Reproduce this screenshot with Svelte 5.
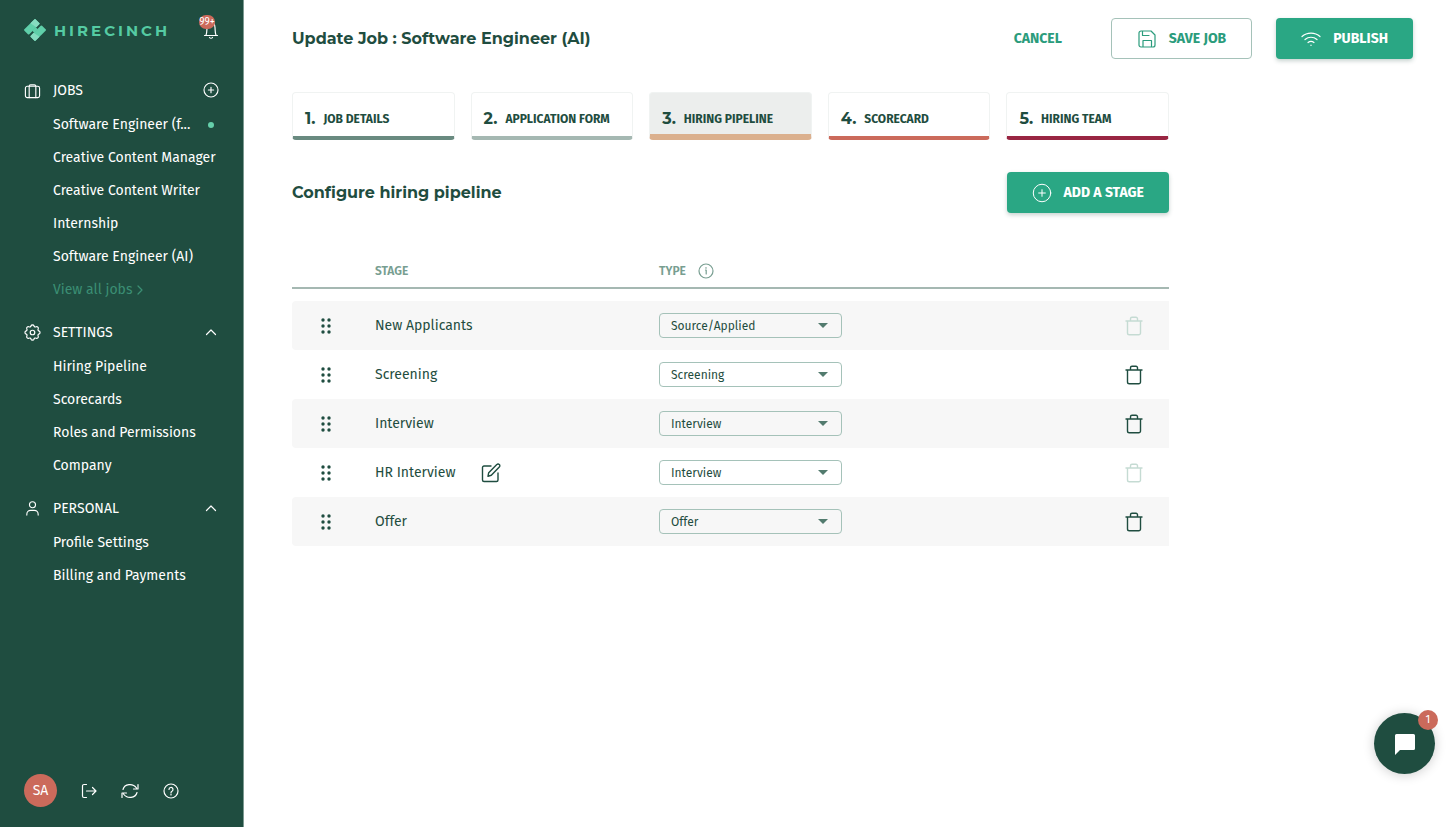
<script lang="ts">
	type Stage = { id: number; name: string; type: string; locked: boolean; editable?: boolean };

	const jobs = [
		{ title: 'Software Engineer (f...', active: true },
		{ title: 'Creative Content Manager' },
		{ title: 'Creative Content Writer' },
		{ title: 'Internship' },
		{ title: 'Software Engineer (AI)' }
	];

	const settings = ['Hiring Pipeline', 'Scorecards', 'Roles and Permissions', 'Company'];
	const personal = ['Profile Settings', 'Billing and Payments'];

	const steps = [
		{ label: 'Job details', tone: 'pine' },
		{ label: 'Application form', tone: 'sage' },
		{ label: 'Hiring pipeline', tone: 'sand' },
		{ label: 'Scorecard', tone: 'coral' },
		{ label: 'Hiring team', tone: 'wine' }
	];

	const types = ['Source/Applied', 'Screening', 'Interview', 'Offer'];

	let currentStep = $state(2);
	let settingsOpen = $state(true);
	let personalOpen = $state(true);

	let stages: Stage[] = $state([
		{ id: 1, name: 'New Applicants', type: 'Source/Applied', locked: true },
		{ id: 2, name: 'Screening', type: 'Screening', locked: false },
		{ id: 3, name: 'Interview', type: 'Interview', locked: false },
		{ id: 4, name: 'HR Interview', type: 'Interview', locked: true, editable: true },
		{ id: 5, name: 'Offer', type: 'Offer', locked: false }
	]);

	function addStage() {
		const id = Math.max(0, ...stages.map((s) => s.id)) + 1;
		stages.push({ id, name: 'New Stage', type: 'Interview', locked: false, editable: true });
	}

	function removeStage(id: number) {
		stages = stages.filter((s) => s.id !== id);
	}
</script>

{#snippet plusCircle()}
	<svg class="icon" viewBox="0 0 24 24" aria-hidden="true">
		<circle cx="12" cy="12" r="10.5" />
		<path d="M12 8v8M8 12h8" />
	</svg>
{/snippet}

{#snippet chevron(open: boolean)}
	<svg class="icon chevron" class:closed={!open} viewBox="0 0 12 8" aria-hidden="true">
		<path d="M1.500 6.500 6 2l4.500 4.500" />
	</svg>
{/snippet}

<div class="app">
	<aside class="sidebar">
		<div class="brand">
			<a class="logo" href="#home">
				<svg viewBox="0 0 22 22" aria-hidden="true">
					<g transform="rotate(45 11 11)">
						<rect x="3" y="3" width="7" height="16" rx="1" fill="#5fcfa9" />
						<rect x="12" y="3" width="7" height="16" rx="1" fill="#5fcfa9" />
						<path d="M9.500 8.500h3v5h-3z" fill="#5fcfa9" />
						<path d="M3 4a1 1 0 0 1 1-1h5a1 1 0 0 1 1 1v4L3 9.500ZM19 18a1 1 0 0 1-1 1h-5a1 1 0 0 1-1-1v-4l7-1.500Z" fill="#86dcc0" />
					</g>
				</svg>
				<span>HIRECINCH</span>
			</a>
			<button type="button" class="bell" aria-label="Notifications">
				<svg class="icon" viewBox="0 0 16 20" aria-hidden="true">
					<path d="M1.500 15.500h13M3 15.200c1-2.600.8-4.800 1-7.700C4.200 4 5.800 2 8 2s3.800 2 4 5.500c.2 2.900 0 5.100 1 7.700M6.500 17.500c.8 1 2.200 1 3 0" />
				</svg>
				<span class="count">99+</span>
			</button>
		</div>

		<nav>
			<section>
				<div class="nav-head">
					<svg class="icon" viewBox="0 0 18 18" aria-hidden="true">
						<rect x="1.500" y="4.500" width="15" height="12" rx="2" />
						<path d="M5.500 16.500v-12A1.500 1.500 0 0 1 7 3h4a1.500 1.500 0 0 1 1.500 1.500v12" />
					</svg>
					<span>JOBS</span>
					<button type="button" class="add-job" aria-label="Add job">{@render plusCircle()}</button>
				</div>
				{#each jobs as job}
					<a href="#job">{job.title}{#if job.active}<i class="dot"></i>{/if}</a>
				{/each}
				<a class="view-all" href="#jobs">
					View all jobs
					<svg class="icon" viewBox="0 0 6 10" aria-hidden="true"><path d="m1 1 4 4-4 4" /></svg>
				</a>
			</section>

			<section>
				<button type="button" class="nav-head" onclick={() => (settingsOpen = !settingsOpen)}>
					<svg class="icon gear" viewBox="0 0 24 24" aria-hidden="true">
						<circle cx="12" cy="12" r="3.200" />
						<path d="M10 2.500c.5-1.500 3.500-1.500 4 0 .5 1.700 1.700 2.200 3.300 1.300 1.500-.7 3.500 1.300 2.800 2.900-.8 1.600-.3 2.800 1.400 3.300 1.500.5 1.500 3.500 0 4-1.700.5-2.200 1.700-1.400 3.300.7 1.600-1.300 3.600-2.800 2.900-1.600-.9-2.800-.4-3.300 1.300-.5 1.500-3.500 1.500-4 0-.5-1.700-1.700-2.200-3.300-1.300-1.500.7-3.500-1.300-2.800-2.900.8-1.600.3-2.800-1.400-3.300-1.500-.5-1.500-3.500 0-4 1.700-.5 2.200-1.700 1.400-3.300-.7-1.600 1.300-3.600 2.800-2.900 1.600.9 2.800.4 3.300-1.300Z" />
					</svg>
					<span>SETTINGS</span>
					{@render chevron(settingsOpen)}
				</button>
				{#if settingsOpen}
					{#each settings as item}<a href="#settings">{item}</a>{/each}
				{/if}
			</section>

			<section>
				<button type="button" class="nav-head" onclick={() => (personalOpen = !personalOpen)}>
					<svg class="icon" viewBox="0 0 18 18" aria-hidden="true">
						<circle cx="9" cy="5" r="3.200" />
						<path d="M3 16v-1a4 4 0 0 1 4-4h4a4 4 0 0 1 4 4v1" />
					</svg>
					<span>PERSONAL</span>
					{@render chevron(personalOpen)}
				</button>
				{#if personalOpen}
					{#each personal as item}<a href="#personal">{item}</a>{/each}
				{/if}
			</section>
		</nav>

		<div class="account">
			<button type="button" class="avatar">SA</button>
			<button type="button" aria-label="Log out">
				<svg class="icon" viewBox="0 0 16 16" aria-hidden="true">
					<path d="M5.500 1.500H3A1.500 1.500 0 0 0 1.500 3v10A1.500 1.500 0 0 0 3 14.500h2.500M5.500 8H15M11.500 4.500 15 8l-3.500 3.500" />
				</svg>
			</button>
			<button type="button" aria-label="Refresh">
				<svg class="icon refresh" viewBox="0 0 18 16" aria-hidden="true">
					<path d="M2 6.500C3.500.8 11.800-.2 15.500 5M17 1.500v4.500h-4.500M16 9.500C14.500 15.200 6.200 16.200 2.500 11M1 14.500V10h4.500" />
				</svg>
			</button>
			<button type="button" aria-label="Help">
				<svg class="icon" viewBox="0 0 16 16" aria-hidden="true">
					<circle cx="8" cy="8" r="7" />
					<path d="M6 6.500a2 2 0 1 1 3 1.700c-.8.4-1 .7-1 1.500M8 11.200v.8" />
				</svg>
			</button>
		</div>
	</aside>

	<main>
		<header>
			<h1>Update Job : Software Engineer (AI)</h1>
			<div class="actions">
				<button type="button" class="btn text">CANCEL</button>
				<button type="button" class="btn outline">
					<svg class="icon" viewBox="0 0 18 18" aria-hidden="true">
						<path d="M1 3a2 2 0 0 1 2-2h10l4 4v10a2 2 0 0 1-2 2H3a2 2 0 0 1-2-2ZM5 17v-6.500h8.500V17M4.500 1v4.500H11" />
					</svg>
					SAVE JOB
				</button>
				<button type="button" class="btn solid">
					<svg class="icon" viewBox="0 0 20 16" aria-hidden="true">
						<path d="M1 5.500c5-4.600 13-4.600 18 0M4 8.500c3.500-3 8.500-3 12 0M7 11.500c2-1.600 4-1.600 6 0M10 14v.4" />
					</svg>
					PUBLISH
				</button>
			</div>
		</header>

		<div class="content">
			<div class="steps">
				{#each steps as step, i}
					<button
						type="button"
						class="step {step.tone}"
						class:current={currentStep === i}
						onclick={() => (currentStep = i)}
					>
						<b>{i + 1}.</b>
						<span>{step.label}</span>
					</button>
				{/each}
			</div>

			<div class="section-head">
				<h2>Configure hiring pipeline</h2>
				<button type="button" class="btn solid add" onclick={addStage}>
					{@render plusCircle()}
					ADD A STAGE
				</button>
			</div>

			<table>
				<thead>
					<tr>
						<th class="col-drag"></th>
						<th class="col-stage">STAGE</th>
						<th class="col-type">
							<div>
								TYPE
								<svg class="icon" viewBox="0 0 16 16" aria-hidden="true">
									<circle cx="8" cy="8" r="7" />
									<path d="M7.500 7h.7v4M8 4.500v.7" />
								</svg>
							</div>
						</th>
						<th class="col-remove"></th>
					</tr>
				</thead>
				<tbody>
					<tr class="spacer" aria-hidden="true"><td colspan="4"></td></tr>
					{#each stages as stage (stage.id)}
						<tr class="stage">
							<td class="col-drag">
								<svg viewBox="0 0 12 16" aria-label="Drag to reorder">
									{#each [2, 8, 14] as y}
										<circle cx="3" cy={y} r="1.700" />
										<circle cx="9" cy={y} r="1.700" />
									{/each}
								</svg>
							</td>
							<td>
								<div class="name">
									{stage.name}
									{#if stage.editable}
										<button type="button" aria-label="Rename {stage.name}">
											<svg class="icon" viewBox="0 0 20 20" aria-hidden="true">
												<path d="M10 3H3a1.500 1.500 0 0 0-1.500 1.500V17A1.500 1.500 0 0 0 3 18.500h12.500A1.500 1.500 0 0 0 17 17v-7M7 13.200l.7-3.500L15.800 1.600a1.700 1.700 0 0 1 2.500 0 1.700 1.700 0 0 1 0 2.500l-8 8.200Z" />
											</svg>
										</button>
									{/if}
								</div>
							</td>
							<td>
								<label class="select">
									<select bind:value={stage.type} aria-label="Type of {stage.name}">
										{#each types as type}<option>{type}</option>{/each}
									</select>
								</label>
							</td>
							<td class="col-remove">
								<button
									type="button"
									aria-label="Delete {stage.name}"
									disabled={stage.locked}
									onclick={() => removeStage(stage.id)}
								>
									<svg class="icon" viewBox="0 0 18 20" aria-hidden="true">
										<path d="M1 5h16M2.500 5v12A1.800 1.800 0 0 0 4.300 18.800h9.400A1.800 1.800 0 0 0 15.500 17V5M5.500 5V2.800A1.500 1.500 0 0 1 7 1.300h4A1.500 1.500 0 0 1 12.500 2.800V5" />
									</svg>
								</button>
							</td>
						</tr>
					{/each}
				</tbody>
			</table>
		</div>
	</main>

	<button type="button" class="chat" aria-label="Open chat">
		<svg viewBox="0 0 22 22" aria-hidden="true">
			<path d="M1 22V2.500A1.500 1.500 0 0 1 2.500 1h17A1.500 1.500 0 0 1 21 2.500v13a1.500 1.500 0 0 1-1.500 1.500H6Z" fill="#fff" />
		</svg>
		<span>1</span>
	</button>
</div>

<style>
	:global(body) {
		background: #fff;
	}

	.app {
		display: flex;
		min-height: 100vh;
		font-family: 'Fira Sans', 'Noto Sans', sans-serif;
		font-size: 14px;
		color: #1f4d40;
	}

	.app :global(*) {
		box-sizing: border-box;
	}

	button {
		padding: 0;
		border: 0;
		background: none;
		color: inherit;
		font: inherit;
		cursor: pointer;
	}

	a {
		color: inherit;
		text-decoration: none;
	}

	svg {
		display: block;
		flex: none;
	}

	.icon {
		width: 16px;
		height: 16px;
		fill: none;
		stroke: currentColor;
		stroke-width: 1.2;
		stroke-linecap: round;
		stroke-linejoin: round;
	}

	/* Sidebar */
	.sidebar {
		display: flex;
		flex-direction: column;
		flex: none;
		width: 244px;
		padding: 16px 24px 20px;
		border-right: 1px solid #7c9a91;
		background: #1f4d40;
		color: #fff;
	}

	.brand {
		display: flex;
		align-items: center;
		justify-content: space-between;
		height: 28px;
		margin-bottom: 28px;
	}

	.logo {
		display: flex;
		align-items: center;
		gap: 8px;
		color: #55cba3;
		font-family: Montserrat, Inter, sans-serif;
		font-size: 15px;
		font-weight: 700;
		letter-spacing: 3px;
	}

	.logo svg {
		width: 22px;
		height: 22px;
	}

	.bell {
		position: relative;
	}

	.bell .icon {
		width: 16px;
		height: 20px;
	}

	.count {
		position: absolute;
		top: -5px;
		left: -4px;
		width: 16px;
		height: 14px;
		border-radius: 8px;
		background: #cb6a5b;
		font-size: 10px;
		line-height: 14px;
		display: flex;
		justify-content: center;
	}

	section + section {
		margin-top: 8px;
	}

	.nav-head {
		display: flex;
		align-items: center;
		gap: 12px;
		width: 100%;
		height: 36px;
		text-align: left;
	}

	.nav-head > .icon:first-child {
		width: 17px;
		height: 17px;
	}

	.nav-head span {
		flex: 1;
	}

	.nav-head .icon.chevron {
		width: 12px;
		height: 8px;
		margin-right: 2px;
	}

	.chevron.closed {
		transform: rotate(180deg);
	}

	.gear,
	.add-job .icon {
		stroke-width: 1.7;
	}

	nav a {
		display: flex;
		align-items: center;
		height: 33px;
		padding-left: 29px;
		white-space: nowrap;
	}

	.dot {
		width: 6px;
		height: 6px;
		margin: 0 5px 0 auto;
		border-radius: 50%;
		background: #65d0ab;
	}

	nav .view-all {
		gap: 5px;
		color: #3b8f74;
	}

	.view-all .icon {
		width: 6px;
		height: 10px;
	}

	.account {
		display: flex;
		align-items: center;
		gap: 24px;
		margin-top: auto;
	}

	.account .refresh {
		width: 18px;
	}

	.avatar {
		width: 33px;
		height: 33px;
		border-radius: 50%;
		background: #cb6a5b;
	}

	/* Page header */
	main {
		flex: 1;
		min-width: 0;
		padding: 18px 43px 48px 48px;
	}

	header,
	.section-head,
	.actions {
		display: flex;
		align-items: center;
		justify-content: space-between;
	}

	header {
		margin-bottom: 33px;
	}

	.actions {
		gap: 24px;
	}

	h1,
	h2 {
		margin: 0;
		font-family: Montserrat, Inter, sans-serif;
		font-size: 16px;
		font-weight: 700;
		line-height: 24px;
	}

	.btn {
		display: flex;
		align-items: center;
		justify-content: center;
		gap: 12px;
		height: 41px;
		padding: 0 25px;
		border-radius: 4px;
		font-size: 14px;
		font-weight: 700;
		white-space: nowrap;
	}

	.btn .icon {
		width: 20px;
		height: 18px;
	}

	.text,
	.outline {
		color: #2b9c7c;
	}

	.outline {
		border: 1px solid #a5c2b9;
	}

	.solid {
		background: #2aa784;
		color: #fff;
		box-shadow: 0 2px 4px rgba(31, 77, 64, 0.25);
	}

	/* Steps */
	.content {
		max-width: 877px;
	}

	.steps {
		display: grid;
		grid-template-columns: repeat(5, 1fr);
		gap: 16px;
		margin-bottom: 32px;
	}

	.step {
		display: flex;
		align-items: center;
		gap: 8px;
		height: 48px;
		padding: 8px 12px 0;
		border: 1px solid #f0f3f2;
		border-bottom: 4px solid;
		border-radius: 4px;
		white-space: nowrap;
	}

	.step b {
		font-family: Montserrat, Inter, sans-serif;
		font-size: 16px;
	}

	.step span {
		font-size: 12px;
		font-weight: 700;
		text-transform: uppercase;
	}

	.step.current {
		border-bottom-width: 6px;
		padding-top: 10px;
		background: #eceeed;
	}

	.pine { border-bottom-color: #698a80; }
	.sage { border-bottom-color: #a5b8b2; }
	.sand { border-bottom-color: #dbb08e; }
	.coral { border-bottom-color: #cb6a5b; }
	.wine { border-bottom-color: #992542; }

	/* Pipeline table */
	.section-head {
		margin-bottom: 40px;
	}

	.btn.add .icon {
		width: 20px;
		height: 20px;
	}

	table {
		width: 100%;
		border-collapse: separate;
		border-spacing: 0;
		table-layout: fixed;
	}

	th {
		height: 36px;
		padding: 2px 0 0;
		border-bottom: 2px solid #a5b8b2;
		color: #789e91;
		font-size: 12px;
		font-weight: 600;
		text-align: left;
	}

	th div {
		display: flex;
		align-items: center;
		gap: 12px;
	}

	.col-stage {
		width: 284px;
	}

	.col-drag {
		width: 83px;
	}

	.col-drag svg {
		width: 12px;
		height: 16px;
		margin-left: 28px;
		fill: #1f4d40;
	}

	.col-remove {
		width: 70px;
	}

	.spacer td {
		height: 12px;
	}

	td {
		padding: 0;
	}

	.stage td {
		height: 49px;
	}

	.stage:nth-child(even) {
		background: #f7f7f7;
	}

	.stage td:first-child {
		border-radius: 4px 0 0 4px;
	}

	.name {
		display: flex;
		align-items: center;
		gap: 26px;
	}

	.name .icon {
		width: 20px;
		height: 20px;
		stroke-width: 1.4;
	}

	.select {
		position: relative;
		display: block;
		width: 183px;
	}

	.select::after {
		content: '';
		position: absolute;
		top: 10px;
		right: 14px;
		border: 5px solid transparent;
		border-top-color: #527b6e;
		border-bottom: 0;
		pointer-events: none;
	}

	select {
		appearance: none;
		display: block;
		width: 100%;
		height: 25px;
		padding: 0 32px 0 11px;
		border: 1px solid #a5c2b9;
		border-radius: 4px;
		background: transparent;
		color: inherit;
		font: inherit;
		font-size: 12px;
	}

	.col-remove button {
		display: block;
		margin-left: 26px;
	}

	.col-remove .icon {
		width: 18px;
		height: 20px;
		stroke-width: 1.4;
	}

	.col-remove button:disabled {
		color: #c5dbd3;
		cursor: default;
	}

	/* Chat launcher */
	.chat {
		position: fixed;
		right: 21px;
		bottom: 53px;
		display: flex;
		align-items: center;
		justify-content: center;
		width: 61px;
		height: 61px;
		border-radius: 50%;
		background: #1f4d40;
		box-shadow: 0 1px 12px rgba(0, 0, 0, 0.2);
	}

	.chat svg {
		width: 22px;
		height: 22px;
	}

	.chat span {
		position: absolute;
		top: -3px;
		right: -3px;
		width: 20px;
		height: 20px;
		border-radius: 50%;
		background: #cb6a5b;
		color: #fff;
		font-size: 11px;
		line-height: 20px;
	}
</style>
